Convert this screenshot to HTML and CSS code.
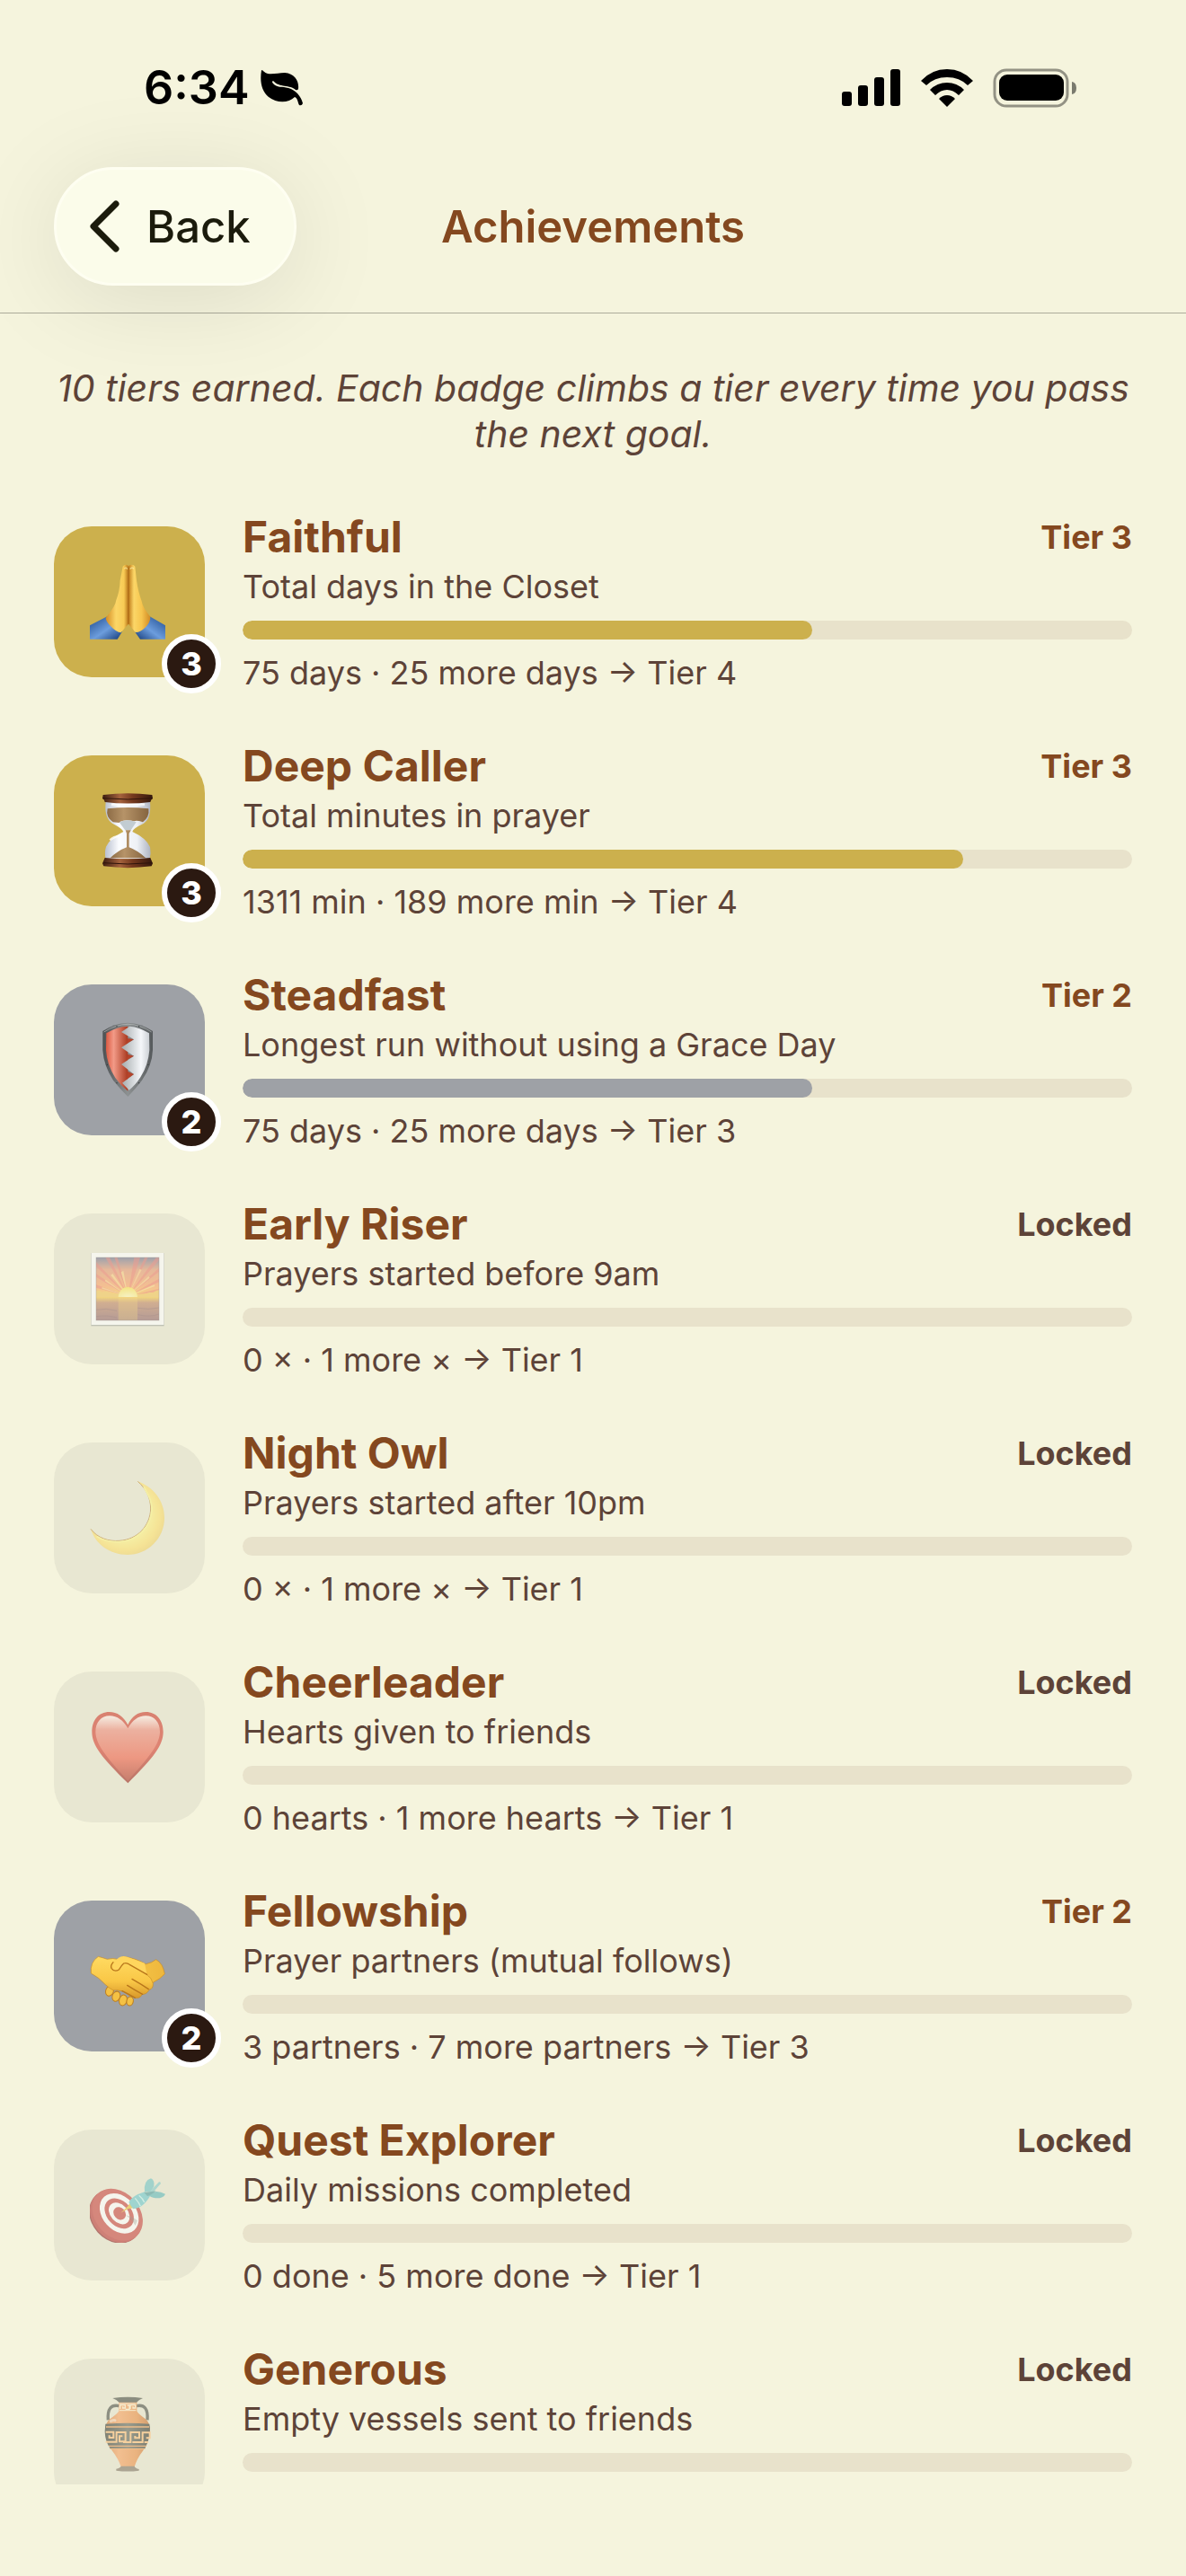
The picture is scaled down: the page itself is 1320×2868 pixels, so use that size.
FILE: index.html
```html
<!DOCTYPE html>
<html lang="en">
<head>
    <meta charset="UTF-8">
    <meta name="viewport" content="width=device-width, initial-scale=1.0">
    <title>Achievements</title>
    <link rel="stylesheet" href="styles.css">
</head>
<body>
    <div class="status-bar">
        <div class="status-left">
            <span class="time">6:34</span>
            <svg class="leaf" width="48" height="40" viewBox="0 0 48 40">
                <path d="M1 0C3 0 4 3 8 4C14 5 20 3 27 3C38 4 43 12 42 21Q41 23 39 22C33 16 21 20 14 12Q12 13 14 15C18 20 24 18 31 20C39 22 45 29 47 37Q46 40 43 39C41 36 42 32 38 30C31 37 18 37 9 30C1 23 -1 13 1 0Z"/>
            </svg>
        </div>
        <div class="status-right">
            <svg width="66" height="42" viewBox="0 0 66 42">
                <rect x="0" y="25" width="11" height="16" rx="3"/>
                <rect x="18" y="18" width="11" height="23" rx="3"/>
                <rect x="36" y="9" width="11" height="32" rx="3"/>
                <rect x="54" y="0" width="11" height="41" rx="3"/>
            </svg>
            <svg width="58" height="42" viewBox="0 0 58 42">
                <path d="M0 13Q12 0 29 0T58 13L52 18Q43 9 29 9T6 18Z"/>
                <path d="M10 23Q18 15 29 15T48 23L42 29Q36 23 29 23T16 29Z"/>
                <path d="M20 33Q24 29 29 29T38 33L29 42Z"/>
            </svg>
            <svg width="94" height="44" viewBox="0 0 94 44">
                <rect x="2" y="2" width="81" height="40" rx="13" fill="none" stroke="#000" stroke-opacity=".4" stroke-width="3"/>
                <rect x="7" y="7" width="72" height="29" rx="9"/>
                <path d="M88 15Q93 16 93 22T88 29Z" fill-opacity=".5"/>
            </svg>
        </div>
    </div>

    <header class="nav">
        <button class="back-button" type="button">
            <svg width="34" height="58" viewBox="0 0 34 58">
                <path d="M30 4L5 29L30 54" fill="none" stroke="#1b1b0c" stroke-width="7" stroke-linecap="round" stroke-linejoin="round"/>
            </svg>
            Back
        </button>
        <h1>Achievements</h1>
    </header>

    <main class="content">
        <p class="intro">10 tiers earned. Each badge climbs a tier every time you pass the next goal.</p>

        <ul class="achievements">
            <li class="achievement">
                <div class="badge gold">
                    <svg class="icon" viewBox="0 0 252 252">
                        <defs>
                            <linearGradient id="skinLeft"><stop offset="0" stop-color="#d48b22"/><stop offset=".45" stop-color="#fbd667"/><stop offset=".8" stop-color="#f8cb55"/><stop offset="1" stop-color="#b87317"/></linearGradient>
                            <linearGradient id="skinRight"><stop offset="0" stop-color="#c07b1b"/><stop offset=".25" stop-color="#fbd667"/><stop offset=".6" stop-color="#f6c54e"/><stop offset="1" stop-color="#d18a24"/></linearGradient>
                            <linearGradient id="sleeve" x1="0" y1="0" x2="1" y2="1"><stop offset="0" stop-color="#1d4a8d"/><stop offset=".55" stop-color="#6c9ddd"/><stop offset="1" stop-color="#143a78"/></linearGradient>
                            <linearGradient id="sleeveRight" x1="1" y1="0" x2="0" y2="1"><stop offset="0" stop-color="#1d4a8d"/><stop offset=".55" stop-color="#6c9ddd"/><stop offset="1" stop-color="#143a78"/></linearGradient>
                        </defs>
                        <path d="M0 205L58 175Q78 208 108 226L92 251H0Z" fill="url(#sleeve)"/>
                        <path d="M252 205L200 175Q178 208 150 226L168 251H252Z" fill="url(#sleeveRight)"/>
                        <path d="M110 8Q119 -2 128 6L129 200Q117 212 104 229Q88 228 70 208Q54 193 53 180Q86 140 88 120Q100 90 101 55Z" fill="url(#skinLeft)"/>
                        <path d="M129 6Q144 -2 151 8L156 55Q162 95 173 124Q176 145 202 176Q202 194 187 210Q168 229 152 228L129 200Z" fill="url(#skinRight)"/>
                        <path d="M129 10V200" stroke="#a96412" stroke-width="3"/>
                        <path d="M115 16Q121 8 125 17M134 17Q141 8 147 16" fill="none" stroke="#fff0a6" stroke-width="4" opacity=".7"/>
                    </svg>
                    <span class="tier-number">3</span>
                </div>
                <div class="details">
                    <div class="title-row"><h2>Faithful</h2><span class="tier">Tier 3</span></div>
                    <p class="description">Total days in the Closet</p>
                    <div class="bar" role="progressbar" aria-label="Faithful"><div class="fill gold" style="width: 64%"></div></div>
                    <p class="progress-text">75 days · 25 more days → Tier 4</p>
                </div>
            </li>

            <li class="achievement">
                <div class="badge gold">
                    <svg class="icon" viewBox="0 0 252 252">
                        <defs>
                            <linearGradient id="wood"><stop offset="0" stop-color="#3b1c10"/><stop offset=".35" stop-color="#a4623d"/><stop offset=".6" stop-color="#74391e"/><stop offset="1" stop-color="#32170d"/></linearGradient>
                            <linearGradient id="glass"><stop offset="0" stop-color="#b9c0cf"/><stop offset=".3" stop-color="#fbfcff"/><stop offset=".7" stop-color="#eef1f6"/><stop offset="1" stop-color="#aeb4c2"/></linearGradient>
                            <linearGradient id="sand"><stop offset="0" stop-color="#8d6c46"/><stop offset=".4" stop-color="#b69368"/><stop offset="1" stop-color="#85643f"/></linearGradient>
                        </defs>
                        <path d="M53 30H201Q206 84 180 101Q142 119 142 129Q188 150 201 180Q205 200 200 220H53Q48 198 54 179Q68 150 112 129Q110 119 75 101Q47 82 53 30Z" fill="url(#glass)"/>
                        <path d="M59 52Q127 44 196 52Q200 80 177 97Q155 90 148 94Q112 86 98 99L77 97Q52 80 59 52Z" fill="url(#sand)"/>
                        <path d="M98 97Q125 84 155 97L137 124H118Z" fill="#c2ccd2"/>
                        <path d="M119 124H137L131 135V181Q160 192 187 217H68Q92 193 123 181V135Z" fill="url(#sand)"/>
                        <path d="M67 157Q80 145 98 144M72 38H183" fill="none" stroke="#fff" stroke-width="7" opacity=".8"/>
                        <path d="M44 6Q127 -5 208 6L210 18Q203 22 202 30Q127 39 50 30Q50 22 42 18Z" fill="url(#wood)"/>
                        <path d="M50 216Q127 224 202 216L210 235L206 244Q127 255 46 244L42 235Z" fill="url(#wood)"/>
                        <path d="M44 17Q127 25 209 17M45 233Q127 241 208 233" fill="none" stroke="#2e140b" stroke-width="3"/>
                    </svg>
                    <span class="tier-number">3</span>
                </div>
                <div class="details">
                    <div class="title-row"><h2>Deep Caller</h2><span class="tier">Tier 3</span></div>
                    <p class="description">Total minutes in prayer</p>
                    <div class="bar" role="progressbar" aria-label="Deep Caller"><div class="fill gold" style="width: 81%"></div></div>
                    <p class="progress-text">1311 min · 189 more min → Tier 4</p>
                </div>
            </li>

            <li class="achievement">
                <div class="badge silver">
                    <svg class="icon" viewBox="0 0 252 252">
                        <defs>
                            <linearGradient id="rim"><stop offset="0" stop-color="#4c5052"/><stop offset=".5" stop-color="#8d9192"/><stop offset="1" stop-color="#55595b"/></linearGradient>
                            <linearGradient id="shieldRed"><stop offset="0" stop-color="#dc5a42"/><stop offset=".35" stop-color="#f29a87"/><stop offset="1" stop-color="#a9391f"/></linearGradient>
                            <linearGradient id="shieldWhite"><stop offset="0" stop-color="#a4aaac"/><stop offset=".7" stop-color="#f5f7fa"/><stop offset="1" stop-color="#ccd0d5"/></linearGradient>
                        </defs>
                        <path d="M43 30Q82 3 127 2Q170 3 210 30V93Q208 145 174 194Q151 224 127 249Q102 224 78 194Q46 145 43 93Z" fill="url(#rim)"/>
                        <path d="M55 37Q91 15 127 14V230Q102 211 85 186Q57 142 54 93Z" fill="url(#shieldRed)"/>
                        <path d="M133 14Q166 17 198 37L199 93Q195 144 169 184Q152 211 131 227L108 203L147 174L105 141L147 113L105 85L147 58L105 33Z" fill="url(#shieldWhite)"/>
                        <path d="M127 54L147 58L123 72ZM126 107L147 113L123 127ZM126 164L147 174L123 191Z" fill="#b4432a"/>
                        <path d="M47 33Q87 7 127 7T206 33" fill="none" stroke="#b8bcbd" stroke-width="2"/>
                        <g fill="#33383a"><circle cx="90" cy="14" r="2"/><circle cx="164" cy="14" r="2"/><circle cx="58" cy="142" r="2"/><circle cx="195" cy="142" r="2"/><circle cx="90" cy="203" r="2"/><circle cx="164" cy="203" r="2"/></g>
                    </svg>
                    <span class="tier-number">2</span>
                </div>
                <div class="details">
                    <div class="title-row"><h2>Steadfast</h2><span class="tier">Tier 2</span></div>
                    <p class="description">Longest run without using a Grace Day</p>
                    <div class="bar" role="progressbar" aria-label="Steadfast"><div class="fill silver" style="width: 64%"></div></div>
                    <p class="progress-text">75 days · 25 more days → Tier 3</p>
                </div>
            </li>

            <li class="achievement locked">
                <div class="badge">
                    <svg class="icon" viewBox="0 0 252 252">
                        <defs>
                            <linearGradient id="dawn" x1="0" y1="0" x2="0" y2="1"><stop offset="0" stop-color="#6f7594"/><stop offset=".3" stop-color="#e59a76"/><stop offset=".7" stop-color="#fba468"/><stop offset="1" stop-color="#ffd24f"/></linearGradient>
                            <linearGradient id="sea" x1="0" y1="0" x2="0" y2="1"><stop offset="0" stop-color="#f8cb4a"/><stop offset=".25" stop-color="#c18867"/><stop offset="1" stop-color="#94696d"/></linearGradient>
                            <radialGradient id="sun" cx=".5" cy="1" r="1"><stop offset="0" stop-color="#fffbc0"/><stop offset="1" stop-color="#fbe14e"/></radialGradient>
                        </defs>
                        <rect x="4" y="6" width="244" height="244" fill="#a5aaa2"/>
                        <rect x="5" y="6" width="242" height="240" fill="#fff"/>
                        <rect x="21" y="21" width="210" height="135" fill="url(#dawn)"/>
                        <g fill="#ee6c66" opacity=".55">
                            <path d="M127 150L21 36V52ZM127 150L52 21H66ZM127 150L82 21H92ZM127 150L148 21H168ZM127 150L183 21H194ZM127 150L221 21H231V30ZM127 150L231 56V68ZM127 150L231 92V103ZM127 150L231 125V134ZM127 150L21 75V86ZM127 150L21 112V122Z"/>
                        </g>
                        <g fill="#ffe98e" opacity=".6">
                            <path d="M127 150L104 70L112 66ZM127 150L70 80L76 75ZM127 150L50 100L53 95ZM127 150L166 60L173 62ZM127 150L196 84L200 89ZM127 150L215 112L217 117ZM127 150L40 125L41 120Z"/>
                        </g>
                        <path d="M21 134Q31 128 40 137Q55 129 72 142H96V156H21ZM231 130Q217 132 211 141Q199 134 189 143H158V156H231Z" fill="#f5c75a"/>
                        <path d="M95 154A32 34 0 0 1 159 154Z" fill="url(#sun)"/>
                        <rect x="21" y="153" width="210" height="78" fill="url(#sea)"/>
                        <rect x="95" y="153" width="64" height="78" fill="#ffd35b" opacity=".3"/>
                        <path d="M21 196Q55 189 90 199M160 190Q195 197 231 189M21 218Q60 213 90 222M160 212Q200 222 231 210" fill="none" stroke="#805960" stroke-width="3" opacity=".5"/>
                        <rect x="21" y="21" width="210" height="210" fill="none" stroke="#74686a" stroke-width="2" opacity=".6"/>
                    </svg>
                </div>
                <div class="details">
                    <div class="title-row"><h2>Early Riser</h2><span class="tier">Locked</span></div>
                    <p class="description">Prayers started before 9am</p>
                    <div class="bar" role="progressbar" aria-label="Early Riser"></div>
                    <p class="progress-text">0 × · 1 more × → Tier 1</p>
                </div>
            </li>

            <li class="achievement locked">
                <div class="badge">
                    <svg class="icon" viewBox="0 0 252 252">
                        <defs>
                            <radialGradient id="moon" cx=".45" cy=".45" r=".6"><stop offset=".55" stop-color="#fff487"/><stop offset=".8" stop-color="#ffe26f"/><stop offset="1" stop-color="#efcf66"/></radialGradient>
                        </defs>
                        <path d="M160 4C212 22 249 70 249 125C249 194 194 249 125 249C68 249 18 214 3 163C27 194 63 205 99 202C160 198 201 152 203 96C203 58 188 29 160 4Z" fill="url(#moon)"/>
                        <path d="M160 4C188 29 203 58 203 96C201 152 160 198 99 202C63 205 27 194 3 163" fill="none" stroke="#bd8c43" stroke-width="3"/>
                        <path d="M180 22C195 50 207 68 207 96C205 154 162 202 99 206C70 207 42 200 23 188" fill="none" stroke="#fff789" stroke-width="5"/>
                    </svg>
                </div>
                <div class="details">
                    <div class="title-row"><h2>Night Owl</h2><span class="tier">Locked</span></div>
                    <p class="description">Prayers started after 10pm</p>
                    <div class="bar" role="progressbar" aria-label="Night Owl"></div>
                    <p class="progress-text">0 × · 1 more × → Tier 1</p>
                </div>
            </li>

            <li class="achievement locked">
                <div class="badge">
                    <svg class="icon" viewBox="0 0 252 252">
                        <defs>
                            <linearGradient id="heartEdge" x1="0" y1="0" x2="0" y2="1"><stop offset="0" stop-color="#cf3f30"/><stop offset=".5" stop-color="#d94335"/><stop offset="1" stop-color="#9b2b23"/></linearGradient>
                            <linearGradient id="heartFill" x1="0" y1="0" x2="0" y2="1"><stop offset="0" stop-color="#fff0ec"/><stop offset=".22" stop-color="#ef8d7e"/><stop offset=".65" stop-color="#f1634d"/><stop offset="1" stop-color="#b03a2c"/></linearGradient>
                        </defs>
                        <path d="M127 52C113 24 91 9 65 9C29 9 7 37 7 75C7 121 39 160 127 247C214 160 245 121 245 75C245 37 222 9 187 9C160 9 140 24 127 52Z" fill="url(#heartEdge)"/>
                        <path d="M127 64C111 37 92 22 66 22C38 22 19 43 19 76C20 116 51 156 127 239C202 156 233 116 234 76C234 43 215 22 187 22C160 22 143 37 127 64Z" fill="url(#heartFill)"/>
                    </svg>
                </div>
                <div class="details">
                    <div class="title-row"><h2>Cheerleader</h2><span class="tier">Locked</span></div>
                    <p class="description">Hearts given to friends</p>
                    <div class="bar" role="progressbar" aria-label="Cheerleader"></div>
                    <p class="progress-text">0 hearts · 1 more hearts → Tier 1</p>
                </div>
            </li>

            <li class="achievement">
                <div class="badge silver">
                    <svg class="icon" viewBox="0 0 252 252">
                        <defs>
                            <linearGradient id="hand" x1="0" y1="0" x2="0" y2="1"><stop offset="0" stop-color="#ffdb62"/><stop offset=".6" stop-color="#f9c746"/><stop offset="1" stop-color="#d8982a"/></linearGradient>
                            <linearGradient id="handBack"><stop offset="0" stop-color="#f7c949"/><stop offset="1" stop-color="#eeb73d"/></linearGradient>
                        </defs>
                        <path d="M108 61Q151 65 187 86Q207 82 221 71Q244 83 250 119Q236 135 212 147L190 174L99 130Z" fill="url(#handBack)" stroke="#c78b26" stroke-width="2"/>
                        <g fill="#f4c144" stroke="#bd7e20" stroke-width="3">
                            <ellipse cx="66" cy="176" rx="13" ry="17" transform="rotate(20 66 176)"/>
                            <ellipse cx="88" cy="194" rx="13" ry="17" transform="rotate(20 88 194)"/>
                            <ellipse cx="111" cy="207" rx="13" ry="18" transform="rotate(15 111 207)"/>
                            <ellipse cx="134" cy="210" rx="11" ry="15" transform="rotate(10 134 210)"/>
                        </g>
                        <path d="M4 117Q0 80 28 61Q44 65 58 70Q78 65 92 70Q119 60 137 81Q161 91 187 119Q208 132 211 151Q212 169 198 172Q190 188 175 187Q167 204 149 198Q133 194 111 178Q93 171 78 174Q63 165 51 154Q32 132 4 117Z" fill="url(#hand)" stroke="#c78b26" stroke-width="2"/>
                        <path d="M77 101Q80 75 96 65Q107 57 125 62L183 83L190 119L133 88Q117 77 106 96Q97 110 79 107Q73 106 77 101Z" fill="#ffd65d"/>
                        <path d="M78 80Q68 91 72 100Q82 114 97 105Q106 90 113 84Q123 80 133 88L191 121M141 136Q173 154 196 170M125 157Q150 173 176 187M108 176Q130 187 151 199" fill="none" stroke="#b8761b" stroke-width="4" stroke-linecap="round"/>
                    </svg>
                    <span class="tier-number">2</span>
                </div>
                <div class="details">
                    <div class="title-row"><h2>Fellowship</h2><span class="tier">Tier 2</span></div>
                    <p class="description">Prayer partners (mutual follows)</p>
                    <div class="bar" role="progressbar" aria-label="Fellowship"></div>
                    <p class="progress-text">3 partners · 7 more partners → Tier 3</p>
                </div>
            </li>

            <li class="achievement locked">
                <div class="badge">
                    <svg class="icon" viewBox="0 0 252 252">
                        <g transform="rotate(48 90 160)">
                            <ellipse cx="90" cy="168" rx="96" ry="78" fill="#8f2d2d"/>
                            <ellipse cx="90" cy="164" rx="97" ry="78" fill="#bd3c3b"/>
                            <ellipse cx="90" cy="157" rx="96" ry="74" fill="#c94844"/>
                        </g>
                        <g transform="rotate(48 98 154)">
                            <ellipse cx="98" cy="154" rx="75" ry="56" fill="#fff"/>
                            <ellipse cx="98" cy="154" rx="57" ry="41" fill="#c94844"/>
                            <ellipse cx="98" cy="154" rx="41" ry="29" fill="#fff"/>
                            <ellipse cx="99" cy="153" rx="23" ry="19" fill="#c94844"/>
                        </g>
                        <path d="M119 160Q140 162 159 178L152 194Q139 173 119 160Z" fill="#6e706a" opacity=".35"/>
                        <path d="M103 152L127 130L134 119L148 136L129 138Z" fill="#ecc33d"/>
                        <path d="M130 116Q141 95 183 82L204 91Q179 137 145 139Q136 129 130 116Z" fill="#6fc9ce"/>
                        <path d="M183 82Q179 44 204 37Q217 43 214 64L203 82Z" fill="#73c5c7"/>
                        <path d="M200 81L231 49Q238 48 236 55L211 84Z" fill="#86cccc"/>
                        <path d="M194 90Q221 73 252 89Q246 104 219 103Q203 101 194 90Z" fill="#62b9bb"/>
                        <path d="M181 84Q198 82 221 79Q205 93 192 96Z" fill="#529fa1"/>
                        <path d="M151 103Q163 116 169 130M164 94Q177 105 182 117" fill="none" stroke="#c3f2ef" stroke-width="4"/>
                    </svg>
                </div>
                <div class="details">
                    <div class="title-row"><h2>Quest Explorer</h2><span class="tier">Locked</span></div>
                    <p class="description">Daily missions completed</p>
                    <div class="bar" role="progressbar" aria-label="Quest Explorer"></div>
                    <p class="progress-text">0 done · 5 more done → Tier 1</p>
                </div>
            </li>

            <li class="achievement locked">
                <div class="badge">
                    <svg class="icon" viewBox="0 0 252 252">
                        <defs>
                            <linearGradient id="clay"><stop offset="0" stop-color="#d77f3b"/><stop offset=".3" stop-color="#f9a566"/><stop offset=".7" stop-color="#eb9149"/><stop offset="1" stop-color="#c56e30"/></linearGradient>
                            <linearGradient id="band"><stop offset="0" stop-color="#3d413a"/><stop offset=".5" stop-color="#666a60"/><stop offset="1" stop-color="#363a33"/></linearGradient>
                        </defs>
                        <path d="M98 32Q57 23 61 79M155 32Q196 23 192 79" fill="none" stroke="#52564e" stroke-width="10"/>
                        <path d="M97 16H157V49Q160 58 188 77Q202 91 201 117Q197 154 177 182Q157 208 149 235H104Q95 208 75 182Q55 154 51 117Q50 91 65 77Q93 58 97 49Z" fill="url(#clay)"/>
                        <path d="M76 6Q127 -1 177 6Q162 12 156 20H98Q91 12 76 6Z" fill="#4f534b"/>
                        <path d="M99 24H154M99 47H154" stroke="#fff0cd" stroke-width="3"/>
                        <path d="M101 42V29H118V39H110V34M119 43H132V30H125M135 42V29H152V39H144V34" fill="none" stroke="#fff0cd" stroke-width="4"/>
                        <path d="M52 92Q127 86 199 92Q204 120 194 151L183 176H69Q51 151 50 118Z" fill="url(#band)"/>
                        <path d="M54 102H198M63 166H189M68 175H184" stroke="#eea25e" stroke-width="4"/>
                        <path d="M53 119H79V138H65V130M53 152H89V120H119V151H99V133H109M111 153H136V120H165V139H151V132M142 153H176V121H200V139H188M182 153H195" fill="none" stroke="#ffc27d" stroke-width="6"/>
                        <path d="M104 233H149Q150 239 164 243V248Q127 253 88 248V242Q102 239 104 233Z" fill="#847969"/>
                        <path d="M70 83Q77 79 84 80" stroke="#fff" stroke-width="9" stroke-linecap="round" opacity=".5"/>
                    </svg>
                </div>
                <div class="details">
                    <div class="title-row"><h2>Generous</h2><span class="tier">Locked</span></div>
                    <p class="description">Empty vessels sent to friends</p>
                    <div class="bar" role="progressbar" aria-label="Generous"></div>
                </div>
            </li>
        </ul>
    </main>
</body>
</html>
```

FILE: styles.css
```css
:root {
    --background: #f5f4dd;
    --heading: #84481f;
    --text: #5d4338;
    --gold: #ccb04d;
    --silver: #9ea1a6;
    --locked: #e8e7d2;
    --track: #e8e2cb;
    --badge-dark: #2b1911;
}

* {
    margin: 0;
    padding: 0;
    box-sizing: border-box;
}

body {
    display: flex;
    flex-direction: column;
    height: 100vh;
    padding-bottom: 102px;
    background: var(--background);
    color: var(--text);
    font-family: Inter, "Liberation Sans", sans-serif;
    overflow: hidden;
}

/* status bar */
.status-bar {
    display: flex;
    justify-content: space-between;
    align-items: center;
    flex-shrink: 0;
    padding: 66px 121px 57px 160px;
    color: #000;
}

.status-left {
    display: flex;
    align-items: center;
    gap: 12px;
}

.time {
    font-size: 52px;
    font-weight: 600;
    line-height: 63px;
}

.status-right {
    display: flex;
    align-items: center;
    gap: 22px;
}

/* navigation */
.nav {
    display: grid;
    grid-template-columns: 1fr auto 1fr;
    align-items: center;
    flex-shrink: 0;
    padding: 0 60px 30px;
    border-bottom: 1px solid #acab9b;
}

.back-button {
    display: flex;
    align-items: center;
    justify-self: start;
    gap: 30px;
    height: 132px;
    padding: 0 48px 0 36px;
    border: 3px solid #fefef1;
    border-radius: 66px;
    background: #fbfcea;
    box-shadow: 0 14px 110px rgba(0, 0, 0, 0.1);
    color: #1b1b0c;
    font-family: inherit;
    font-size: 49px;
    font-weight: 500;
    cursor: pointer;
}

.nav h1 {
    color: var(--heading);
    font-size: 49px;
    font-weight: 600;
}

/* list */
.content {
    flex: 1;
    min-height: 0;
    padding: 58px 60px 0;
    overflow: hidden;
}

.intro {
    margin-bottom: 60px;
    font-size: 41px;
    font-style: italic;
    line-height: 51px;
    text-align: center;
}

.achievements {
    display: flex;
    flex-direction: column;
    gap: 53px;
    list-style: none;
}

.achievement {
    display: flex;
    align-items: flex-start;
    gap: 42px;
}

.badge {
    position: relative;
    display: flex;
    align-items: center;
    justify-content: center;
    flex-shrink: 0;
    width: 168px;
    height: 168px;
    margin-top: 17px;
    padding-right: 4px;
    border-radius: 42px;
    background: var(--locked);
}

.gold {
    background: var(--gold);
}

.silver {
    background: var(--silver);
}

.icon {
    width: 84px;
    height: 84px;
}

.locked .icon {
    opacity: 0.6;
}

.tier-number {
    position: absolute;
    right: -18px;
    bottom: -18px;
    width: 66px;
    height: 66px;
    border: 6px solid #fff;
    border-radius: 50%;
    background: var(--badge-dark);
    color: #fff;
    font-size: 36px;
    font-weight: 800;
    line-height: 54px;
    text-align: center;
}

.details {
    flex: 1;
    min-width: 0;
}

.title-row {
    display: flex;
    align-items: center;
    justify-content: space-between;
    margin-bottom: 6px;
}

.title-row h2 {
    color: var(--heading);
    font-size: 48px;
    font-weight: 700;
    line-height: 57px;
}

.tier {
    color: var(--heading);
    font-size: 36px;
    font-weight: 700;
}

.locked .tier {
    color: var(--text);
}

.description,
.progress-text {
    font-size: 36px;
    line-height: 43px;
}

.bar {
    height: 21px;
    margin: 16px 0;
    border-radius: 11px;
    background: var(--track);
    overflow: hidden;
}

.fill {
    height: 100%;
    border-radius: 11px;
}
```
